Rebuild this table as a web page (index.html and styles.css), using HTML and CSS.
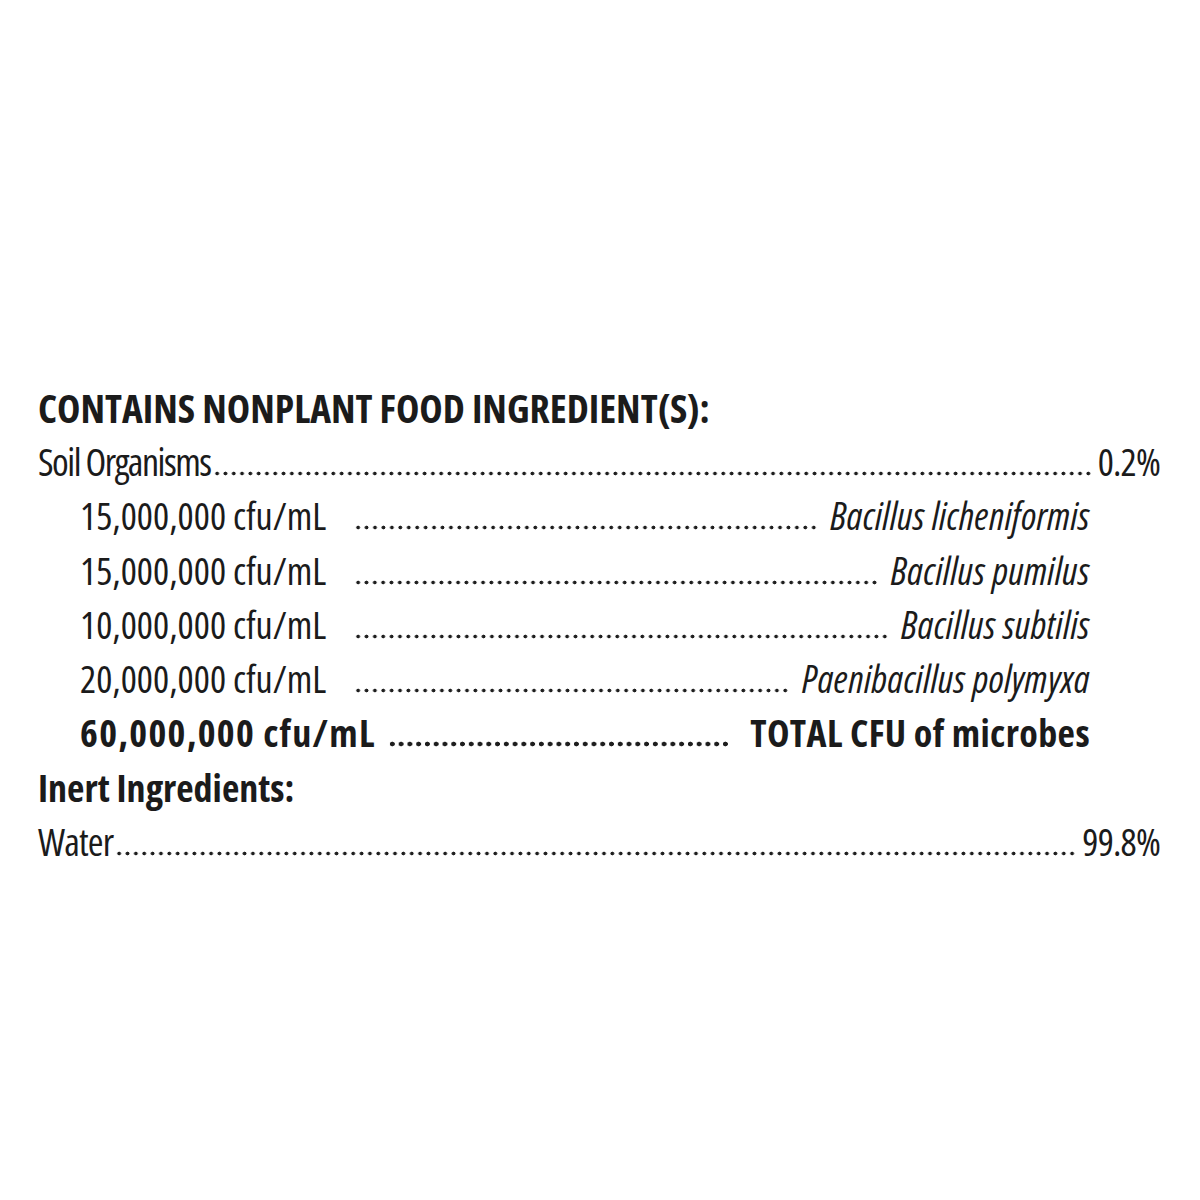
FILE: index.html
```html
<!DOCTYPE html>
<html lang="en">
<head>
<meta charset="utf-8">
<title>Nonplant Food Ingredients</title>
<link rel="stylesheet" href="styles.css">
</head>
<body>
<main class="label">
  <h2 class="head">CONTAINS NONPLANT FOOD INGREDIENT(S):</h2>
  <div class="row">
    <span class="txt lead">Soil Organisms</span><span class="dots tight"></span><span class="txt">0.2%</span>
  </div>
  <div class="row sub">
    <span class="amt">15,000,000 cfu/mL</span><span class="dots"></span><span class="name">Bacillus licheniformis</span>
  </div>
  <div class="row sub">
    <span class="amt">15,000,000 cfu/mL</span><span class="dots"></span><span class="name">Bacillus pumilus</span>
  </div>
  <div class="row sub">
    <span class="amt">10,000,000 cfu/mL</span><span class="dots"></span><span class="name">Bacillus subtilis</span>
  </div>
  <div class="row sub">
    <span class="amt">20,000,000 cfu/mL</span><span class="dots"></span><span class="name">Paenibacillus polymyxa</span>
  </div>
  <div class="row sub total">
    <span class="amt">60,000,000 cfu/mL</span><span class="dots"></span><span class="tname">TOTAL CFU of microbes</span>
  </div>
  <h3 class="subhead">Inert Ingredients:</h3>
  <div class="row">
    <span class="txt">Water</span><span class="dots tight"></span><span class="txt">99.8%</span>
  </div>
</main>
</body>
</html>
```
FILE: styles.css
```css
html, body {
  margin: 0;
  padding: 0;
  background: #ffffff;
}

body {
  width: 1200px;
  height: 1200px;
  color: #1b1b1b;
  font-family: "Open Sans", "DejaVu Sans Condensed", sans-serif;
  font-stretch: 75%;
}

.label {
  width: 1122px;
  margin: 382px 0 0 38px;
  display: flex;
  flex-direction: column;
}

.head,
.subhead {
  margin: 0;
  font-weight: 700;
  white-space: nowrap;
}

.head {
  font-size: 39.5px;
  line-height: 52px;
}

.subhead {
  font-size: 38px;
  line-height: 54.3px;
}

.row {
  display: flex;
  align-items: baseline;
  font-size: 38px;
  line-height: 54.3px;
  white-space: nowrap;
}

.txt {
  letter-spacing: -0.8px;
}

.txt.lead {
  letter-spacing: -1.5px;
}

.row.sub {
  margin-left: 42px;
  margin-right: 70px;
}

.dots {
  flex: 1;
  display: inline-block;
  height: 5px;
  margin: 0 12px 0 28px;
  background-image: radial-gradient(circle at 50% 50%, #1e1e1e 1.6px, transparent 2.2px);
  background-size: 8.3px 5px;
  background-repeat: space no-repeat;
  background-position: left bottom;
}

.dots.tight {
  margin: 0 5px 0 2px;
}

.name {
  font-style: italic;
  letter-spacing: 0.3px;
}

.total {
  font-weight: 700;
}

.total .amt {
  letter-spacing: 1.3px;
}

.total .tname {
  letter-spacing: 0.4px;
}

.total .dots {
  height: 6px;
  margin: 0 20px 0 12px;
  background-image: radial-gradient(circle at 50% 50%, #1e1e1e 2.1px, transparent 2.7px);
  background-size: 8.6px 6px;
}
```
